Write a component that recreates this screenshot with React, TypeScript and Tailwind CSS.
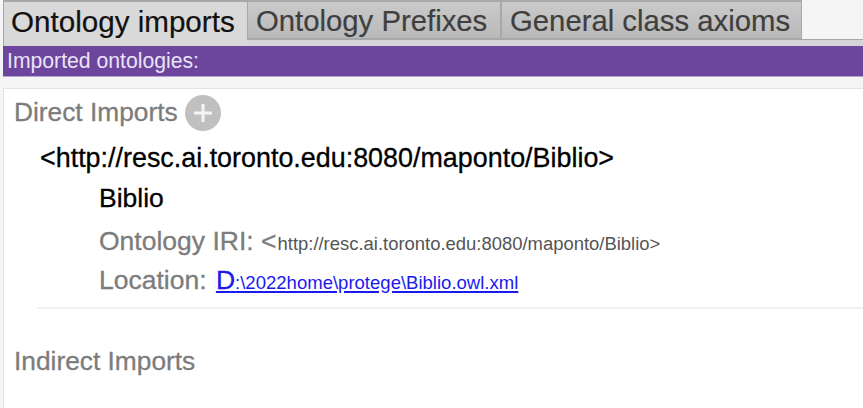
import React from 'react';

function Tab({ label, width, active }: { label: string; width: string; active?: boolean }) {
  if (active) {
    return (
      <div className={`h-[46px] ${width} pl-[7px] border-t-2 border-l border-[#a8a8a8] bg-[#d9d9d9] text-[29.6px] leading-[40px] text-[#111] whitespace-nowrap [-webkit-text-stroke:0.2px]`}>
        {label}
      </div>
    );
  }
  return (
    <div className={`h-[40px] ${width} pl-[8px] border-2 border-[#a8a8a8] border-l border-r bg-gradient-to-b from-[#cacaca] to-[#b9b9b9] text-[29.3px] leading-[37px] text-[#3f3f3f] whitespace-nowrap [-webkit-text-stroke:0.2px]`}>
      {label}
    </div>
  );
}

export default function App() {
  return (
    <div className="w-[863px] h-[408px] overflow-hidden bg-[#f5f5f5] pl-[3px] font-['Liberation_Sans',sans-serif]">
      {/* Tabs */}
      <div className="h-[46px] relative">
        <div className="relative z-10 flex items-start">
          <Tab label="Ontology imports" width="w-[244px]" active />
          <Tab label="Ontology Prefixes" width="w-[254px]" />
          <Tab label="General class axioms" width="w-[301px]" />
        </div>
        <div className="absolute left-[243px] right-0 top-[39px] h-[7px] bg-[#d5d5d8] border-t border-[#a8a8a8]" />
      </div>

      {/* Purple header */}
      <div className="h-[31px] bg-[#6d459d] border-b border-[#b9a5d3] pl-[4px] text-[21.2px] leading-[30px] text-[#e9e3f5]">
        Imported ontologies:
      </div>

      {/* Body */}
      <div className="mt-[11px] h-[321px] bg-white border-t border-l border-[#e4e4e4] pt-[6px]">
        <div className="flex items-center pl-[10px] h-[36px] gap-[7px]">
          <span className="text-[26.3px] text-[#7c7c7c] [-webkit-text-stroke:0.3px]">Direct Imports</span>
          <div className="w-[36px] h-[36px] rounded-full bg-[#c0c0c0] flex items-center justify-center">
            <svg width="22" height="22" viewBox="0 0 22 22">
              <path d="M11 2v18M2 11h18" stroke="#f4f4f4" strokeWidth="3" />
            </svg>
          </div>
        </div>
        <div className="pl-[36px] mt-[11px] text-[26.9px] leading-[32px] text-black [-webkit-text-stroke:0.3px] whitespace-nowrap">
          &lt;http://resc.ai.toronto.edu:8080/maponto/Biblio&gt;
        </div>
        <div className="pl-[95px] mt-[8px] text-[26.5px] leading-[32px] text-black [-webkit-text-stroke:0.3px]">Biblio</div>
        <div className="pl-[95px] mt-[8px] h-[38px] leading-[38px] text-[#7c7c7c] text-[26.5px] whitespace-nowrap [-webkit-text-stroke:0.3px]">
          Ontology IRI: &lt;<span className="ml-[1px] text-[18.45px] text-[#555] [-webkit-text-stroke:0px]">http://resc.ai.toronto.edu:8080/maponto/Biblio&gt;</span>
        </div>
        <div className="pl-[95px] mt-[1px] h-[38px] leading-[38px] text-[#7c7c7c] text-[26.5px] whitespace-nowrap [-webkit-text-stroke:0.3px]">
          Location: <a className="ml-[2px] text-[#1a1aee] underline"><span>D</span><span className="text-[18.55px] [-webkit-text-stroke:0px]">:\2022home\protege\Biblio.owl.xml</span></a>
        </div>
        <div className="ml-[33px] mt-[8px] h-[2px] bg-[#f1f1f1]" />
        <div className="pl-[10px] mt-[36px] text-[26.3px] leading-[32px] text-[#7c7c7c] [-webkit-text-stroke:0.3px]">Indirect Imports</div>
      </div>
    </div>
  );
}
